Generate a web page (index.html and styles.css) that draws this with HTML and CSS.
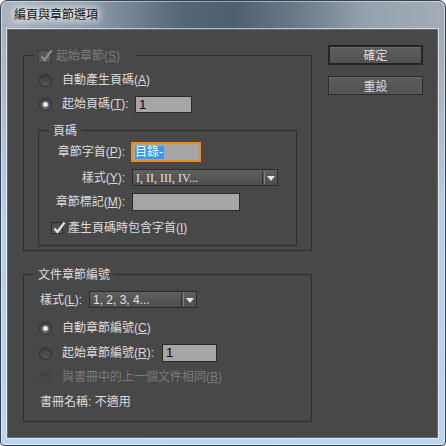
FILE: index.html
```html
<!DOCTYPE html>
<html lang="zh-Hant">
<head>
<meta charset="utf-8">
<title>編頁與章節選項</title>
<link rel="stylesheet" href="styles.css">
</head>
<body>
<div class="window">
  <div class="titlebar"><span class="title">編頁與章節選項</span></div>
  <div class="client">
    <div class="col-left">
      <div class="group g1">
        <div class="legend legend-check">
          <span class="checkbox disabled"><svg class="check" viewBox="0 0 14 14" width="14" height="14"><path d="M2.5 7.5 L5.5 11 L12.5 1.5" fill="none" stroke="#8e8e8e" stroke-width="2.2"/></svg></span>
          <span class="dis">起始章節(<u>S</u>)</span>
        </div>
        <div class="rrow r1"><span class="radio"></span><span class="rtext">自動產生頁碼(<u>A</u>)</span></div>
        <div class="rrow"><span class="radio on"></span><span class="rtext lbl-t">起始頁碼(<u>T</u>):</span><span class="field f-start">1</span></div>
        <div class="group inner">
          <div class="legend">頁碼</div>
          <div class="frow fr1"><span class="flabel">章節字首(<u>P</u>):</span><span class="field focus"><span class="sel">目錄-</span></span></div>
          <div class="frow fr2"><span class="flabel">樣式(<u>Y</u>):</span><span class="select s-roman"><span class="sv roman">I, II, III, IV...</span><span class="sep"></span><span class="arrow"></span></span></div>
          <div class="frow fr3"><span class="flabel">章節標記(<u>M</u>):</span><span class="field f-mark"></span></div>
          <div class="crow"><span class="checkbox"><svg class="check" viewBox="0 0 14 14" width="14" height="14"><path d="M2.5 7.5 L5.5 11 L12.5 1.5" fill="none" stroke="#e4e4e4" stroke-width="2.2"/></svg></span><span class="ctext">產生頁碼時包含字首(<u>I</u>)</span></div>
        </div>
      </div>
      <div class="group g2">
        <div class="legend">文件章節編號</div>
        <div class="frow lrow"><span class="llabel">樣式(<u>L</u>):</span><span class="select s-num"><span class="sv">1, 2, 3, 4...</span><span class="sep"></span><span class="arrow"></span></span></div>
        <div class="rrow rc"><span class="radio on"></span><span class="rtext">自動章節編號(<u>C</u>)</span></div>
        <div class="rrow rr"><span class="radio"></span><span class="rtext lbl-r">起始章節編號(<u>R</u>):</span><span class="field f-chap">1</span></div>
        <div class="rrow"><span class="radio disabled"></span><span class="rtext dis">與書冊中的上一個文件相同(<u>B</u>)</span></div>
        <div class="brow">書冊名稱: 不適用</div>
      </div>
    </div>
    <div class="col-right">
      <button class="btn default">確定</button>
      <button class="btn second">重設</button>
    </div>
  </div>
</div>
</body>
</html>
```
FILE: styles.css
```css
html, body {
  margin: 0;
  padding: 0;
  background: #ffffff;
}
body {
  font: 12px/16px "Liberation Sans", "Noto Sans CJK TC", sans-serif;
  color: #dcdcdc;
}
u { text-decoration: underline; text-underline-offset: 1px; }

.window {
  width: 446px;
  height: 446px;
  box-sizing: border-box;
  display: flex;
  flex-direction: column;
  padding: 0 7px 7px 6px;
  border: 1px solid #38424d;
  border-radius: 7px 7px 4px 4px;
  box-shadow: inset 0 0 0 1px rgba(255,255,255,0.45);
  background:
    linear-gradient(to bottom, rgba(184,212,242,0) 40px, rgba(184,212,242,0.85) 220px, #b9d5f3 100%),
    linear-gradient(to right, #a9b4bf 0%, #8796a6 22%, #566779 40%, #4d5e70 52%, #6e7d8c 68%, #95a1ad 82%, #a3adb7 100%);
}

.titlebar {
  height: 28px;
  display: flex;
  align-items: center;
  padding: 0 0 2px 7px;
  box-sizing: border-box;
}
.title {
  font-family: "Noto Sans CJK TC", sans-serif;
  font-size: 12px;
  color: #111;
  text-shadow: 0 0 6px #fff, 0 0 10px rgba(255,255,255,0.9), 0 0 14px rgba(255,255,255,0.8);
}

.client {
  flex: 1;
  display: flex;
  background: #484848;
  border: 1px solid #5f6b77;
  box-shadow: 0 0 0 1px rgba(255,255,255,0.55);
  padding: 15px 0 0 15px;
}

.col-left {
  width: 289px;
  display: flex;
  flex-direction: column;
}
.col-right {
  margin-left: 16px;
  display: flex;
  flex-direction: column;
}

.group {
  border: 1px solid #2c2c2c;
  box-sizing: border-box;
}
.g1 {
  margin-top: 10px;
  padding-bottom: 4px;
}
.g2 {
  margin-top: 23px;
  padding-bottom: 7px;
}
.inner {
  margin: 14px 14px 0 14px;
  padding-bottom: 9px;
}

.legend {
  display: flex;
  align-items: center;
  width: fit-content;
  height: 16px;
  margin: -8px 0 0 10px;
  padding: 0 4px;
  background: #484848;
  color: #dcdcdc;
}
.legend-check {
  padding-right: 16px;
}
.legend-check .checkbox {
  width: 13px;
  height: 13px;
  margin-right: 5px;
}

.dis { color: #7b7b7b; }

.rrow {
  height: 24px;
  display: flex;
  align-items: center;
}
.r1 { margin-top: 4px; }
.rc { margin-top: 8px; }
.rr { margin-top: 1px; }
.rtext { margin-left: 10px; }
.lbl-t { width: 73px; }
.lbl-r { width: 100px; }

.radio {
  width: 13px;
  height: 13px;
  flex: none;
  box-sizing: border-box;
  margin-left: 15px;
  border-radius: 50%;
  border: 1px solid #2d2d2d;
  background: linear-gradient(#3b3b3b, #575757);
}
.radio.on {
  background:
    radial-gradient(circle, #f2f2f2 0 1.6px, #bdbdbd 2.2px, #6a6a6a 3.2px, rgba(0,0,0,0) 3.8px),
    linear-gradient(#444, #5e5e5e);
}
.radio.disabled {
  border-color: #3e3e3e;
  background: linear-gradient(#424242, #4b4b4b);
}

.field {
  display: block;
  box-sizing: border-box;
  background: #a6a6a6;
  border: 1px solid #2a2a2a;
  color: #000;
  padding-left: 3px;
  font-size: 13px;
}
.f-start { width: 57px; height: 17px; line-height: 15px; }
.f-chap { width: 55px; height: 18px; line-height: 16px; }
.f-mark { width: 108px; height: 18px; margin-left: 7px; }
.focus {
  width: 70px;
  height: 20px;
  border: 2px solid #ee8a1f;
  padding-left: 2px;
  margin-left: 6px;
  display: flex;
  align-items: center;
}
.sel {
  display: block;
  height: 13px;
  line-height: 13px;
  background: #3399ff;
  color: #ffffff;
  font-size: 12px;
  padding-right: 1px;
}

.frow {
  display: flex;
  align-items: center;
}
.flabel {
  width: 86px;
  text-align: right;
}
.fr1 { margin-top: 3px; }
.fr2 { margin-top: 7px; }
.fr3 { margin-top: 7px; }

.select {
  display: flex;
  align-items: center;
  box-sizing: border-box;
  height: 17px;
  border: 1px solid #2a2a2a;
  background: linear-gradient(#606060, #4d4d4d);
  color: #e2e2e2;
  padding-left: 3px;
}
.s-roman { width: 146px; margin-left: 7px; }
.s-num { width: 108px; }
.sv { flex: 1; white-space: nowrap; }
.roman { font-family: "Liberation Serif", serif; font-size: 12px; }
.sep {
  width: 1px;
  height: 13px;
  border-left: 1px solid #2f2f2f;
  border-right: 1px solid #808080;
}
.arrow {
  width: 0;
  height: 0;
  border-left: 4px solid transparent;
  border-right: 4px solid transparent;
  border-top: 5px solid #e6e6e6;
  margin: 1px 2px 0 2px;
}

.lrow {
  margin-top: 8px;
  padding-left: 16px;
}
.llabel { width: 49px; }

.crow {
  margin-top: 9px;
  height: 16px;
  display: flex;
  align-items: center;
  padding-left: 12px;
}
.checkbox {
  position: relative;
  display: block;
  flex: none;
  width: 12px;
  height: 12px;
  box-sizing: border-box;
  border: 1px solid #2b2b2b;
  background: linear-gradient(#4a4a4a, #5e5e5e);
}
.checkbox.disabled {
  border-color: #3c3c3c;
  background: linear-gradient(#555, #5d5d5d);
}
.check {
  position: absolute;
  left: 0;
  top: -2px;
}
.ctext { margin-left: 5px; }

.brow {
  margin-top: 1px;
  height: 24px;
  display: flex;
  align-items: center;
  padding-left: 16px;
}

.btn {
  width: 95px;
  box-sizing: border-box;
  font: 12px/16px "Noto Sans CJK TC", sans-serif;
  color: #dedede;
  background: linear-gradient(#5d5d5d, #525252);
  padding: 0;
  cursor: default;
}
.default {
  height: 20px;
  border: 2px solid #242424;
  box-shadow: inset 0 1px 0 rgba(255,255,255,0.08);
}
.second {
  height: 19px;
  margin-top: 11px;
  border: 1px solid #2b2b2b;
  box-shadow: inset 0 0 0 1px rgba(255,255,255,0.06);
}
```
